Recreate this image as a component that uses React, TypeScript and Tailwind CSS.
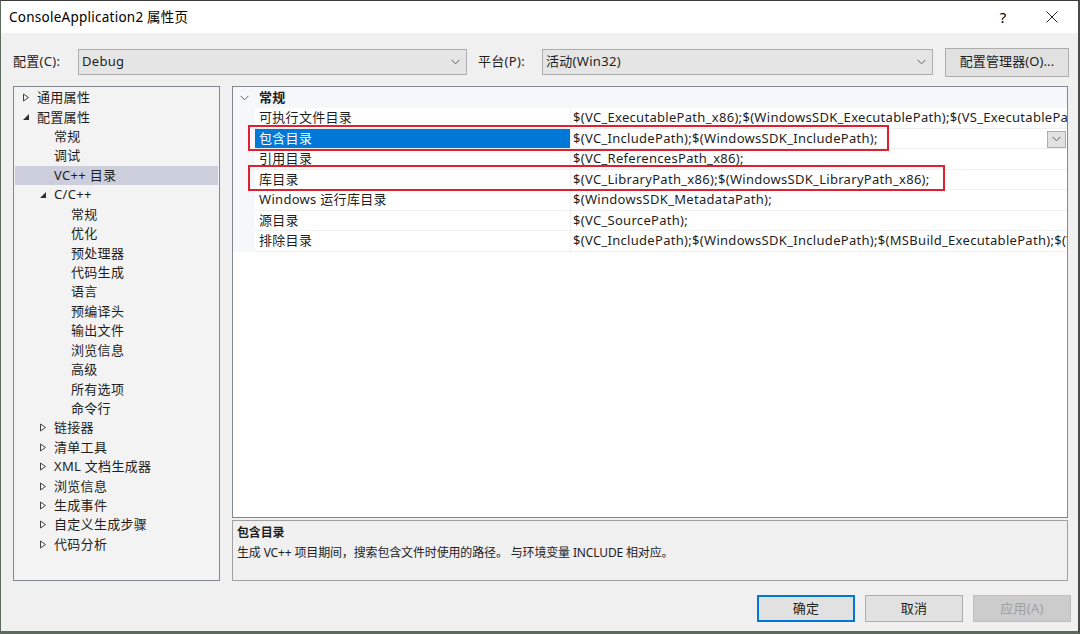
import React from "react";

const FONT = { fontFamily: '"Noto Sans", "Noto Sans CJK SC", sans-serif' };

function Chevron({ className = "" }: { className?: string }) {
  return (
    <svg width="9" height="6" viewBox="0 0 9 6" className={className}>
      <path d="M0.5 0.8 L4.5 4.8 L8.5 0.8" fill="none" stroke="#606060" strokeWidth="1" />
    </svg>
  );
}

function TriOpen() {
  return (
    <svg width="8" height="9" viewBox="0 0 8 9">
      <path d="M1.5 1 L6.5 4.5 L1.5 8 Z" fill="none" stroke="#404040" strokeWidth="1" />
    </svg>
  );
}
function TriFilled() {
  return (
    <svg width="8" height="8" viewBox="0 0 8 8">
      <path d="M7 1 L7 7 L1 7 Z" fill="#303030" />
    </svg>
  );
}

type TreeItem = { label: string; level: number; tri?: "open" | "filled"; selected?: boolean };

const tree: TreeItem[] = [
  { label: "通用属性", level: 0, tri: "open" },
  { label: "配置属性", level: 0, tri: "filled" },
  { label: "常规", level: 1 },
  { label: "调试", level: 1 },
  { label: "VC++ 目录", level: 1, selected: true },
  { label: "C/C++", level: 1, tri: "filled" },
  { label: "常规", level: 2 },
  { label: "优化", level: 2 },
  { label: "预处理器", level: 2 },
  { label: "代码生成", level: 2 },
  { label: "语言", level: 2 },
  { label: "预编译头", level: 2 },
  { label: "输出文件", level: 2 },
  { label: "浏览信息", level: 2 },
  { label: "高级", level: 2 },
  { label: "所有选项", level: 2 },
  { label: "命令行", level: 2 },
  { label: "链接器", level: 1, tri: "open" },
  { label: "清单工具", level: 1, tri: "open" },
  { label: "XML 文档生成器", level: 1, tri: "open" },
  { label: "浏览信息", level: 1, tri: "open" },
  { label: "生成事件", level: 1, tri: "open" },
  { label: "自定义生成步骤", level: 1, tri: "open" },
  { label: "代码分析", level: 1, tri: "open" },
];

const rows = [
  ["可执行文件目录", "$(VC_ExecutablePath_x86);$(WindowsSDK_ExecutablePath);$(VS_ExecutablePath);$(MSBuild_ExecutablePath);$(FxCopDir);$(PATH);"],
  ["包含目录", "$(VC_IncludePath);$(WindowsSDK_IncludePath);"],
  ["引用目录", "$(VC_ReferencesPath_x86);"],
  ["库目录", "$(VC_LibraryPath_x86);$(WindowsSDK_LibraryPath_x86);"],
  ["Windows 运行库目录", "$(WindowsSDK_MetadataPath);"],
  ["源目录", "$(VC_SourcePath);"],
  ["排除目录", "$(VC_IncludePath);$(WindowsSDK_IncludePath);$(MSBuild_ExecutablePath);$(VC_LibraryPath_x86);"],
];

export default function App() {
  return (
    <div
      className="w-[1080px] h-[634px] bg-[#f0f0f0] border-l border-t border-b-[3px] border-r-[2px] border-l-[#5d6b5e] border-t-[#3c3c3c] border-b-[#5d6b5e] border-r-[#4a4a4a] flex flex-col text-[#1e1e1e] overflow-hidden"
      style={FONT}
    >
      {/* title bar */}
      <div className="h-[32px] bg-white flex items-center shrink-0">
        <div className="pl-[8px] text-[13.5px] tracking-[0.25px] text-black flex-1">ConsoleApplication2 属性页</div>
        <div className="w-[46px] text-[15px] text-black text-center mr-[3px]">?</div>
        <div className="w-[46px] flex justify-center mr-[3px]">
          <svg width="12" height="12" viewBox="0 0 12 12">
            <path d="M0.5 0.5 L11.5 11.5 M11.5 0.5 L0.5 11.5" stroke="#222" strokeWidth="1" />
          </svg>
        </div>
      </div>

      {/* config row */}
      <div className="flex items-center h-[28px] mt-[15px] pl-[12px] text-[13px] tracking-[0.3px] shrink-0">
        <div className="w-[65px]">配置(C):</div>
        <div className="w-[389px] h-[26px] bg-[#e5e5e5] border border-[#adadad] flex items-center pl-[3px] pr-[6px]">
          <span className="flex-1">Debug</span>
          <Chevron />
        </div>
        <div className="w-[75px] pl-[11px]">平台(P):</div>
        <div className="w-[391px] h-[26px] bg-[#e5e5e5] border border-[#adadad] flex items-center pl-[3px] pr-[6px]">
          <span className="flex-1">活动(Win32)</span>
          <Chevron />
        </div>
        <div className="ml-[12px] w-[124px] h-[29px] bg-[#e1e1e1] border border-[#adadad] flex items-center justify-center tracking-[0.1px]">
          配置管理器(O)...
        </div>
      </div>

      {/* main */}
      <div className="flex mt-[10px] pl-[12px] gap-[12px] h-[495px] shrink-0">
        {/* tree */}
        <div className="w-[207px] h-full border border-[#828790] bg-[#f3f3f3] pt-[1px] px-[1px] text-[13px] tracking-[0.3px]">
          {tree.map((t, i) => (
            <div
              key={i}
              className={`h-[19.43px] flex items-center ${t.selected ? "bg-[#cccedb]" : ""}`}
            >
              <div
                className={`flex items-center justify-center w-[22px] shrink-0 ${
                  t.level === 0 ? "ml-0" : t.level === 1 ? "ml-[17px]" : "ml-[34px]"
                }`}
              >
                {t.tri === "open" ? <TriOpen /> : t.tri === "filled" ? <TriFilled /> : null}
              </div>
              <span className="leading-none whitespace-nowrap">{t.label}</span>
            </div>
          ))}
        </div>

        {/* right column */}
        <div className="w-[836px] flex flex-col">
          <div className="relative h-[432px] border border-[#828790] bg-white">
            <div className="h-[21px] bg-[#f5f7fa] flex items-center text-[13px] tracking-[0.3px]">
              <div className="w-[22px] flex justify-center">
                <Chevron />
              </div>
              <span className="ml-[4px] font-bold">常规</span>
            </div>
            <div className="flex">
              <div className="w-[22px] bg-[#f5f7fa]" />
              <div className="flex-1 overflow-hidden">
                {rows.map(([name, val], i) => {
                  const sel = i === 1;
                  return (
                    <div key={i} className="h-[20.5px] flex border-b border-[#f0f0f0] text-[13px] tracking-[0.3px]">
                      <div
                        className={`w-[315px] shrink-0 flex items-center pl-[4px] ${
                          sel ? "bg-[#0078d7] text-white" : ""
                        }`}
                      >
                        {name}
                      </div>
                      <div className="w-[1px] bg-[#f0f0f0] shrink-0" />
                      <div className="flex-1 flex items-center pl-[2px] whitespace-nowrap overflow-hidden relative">
                        {val}
                        {sel && (
                          <div className="absolute right-[1px] top-[2px] w-[19px] h-[17px] bg-[#e1e1e1] border border-[#adadad] flex items-center justify-center">
                            <Chevron />
                          </div>
                        )}
                      </div>
                    </div>
                  );
                })}
              </div>
            </div>
            {/* red annotation boxes */}
            <div className="absolute left-[15px] top-[38px] w-[641px] h-[26px] border-[2.5px] border-[#e0202e]" />
            <div className="absolute left-[15px] top-[78px] w-[697px] h-[26px] border-[2.5px] border-[#e0202e]" />
          </div>
          <div className="mt-[2px] h-[61px] border border-[#a0a0a0] bg-[#f0f0f0] px-[4px] pt-[2px] text-[12px] tracking-[-0.15px]">
            <div className="font-bold leading-[20px]">包含目录</div>
            <div className="leading-[20px]">生成 VC++ 项目期间，搜索包含文件时使用的路径。 与环境变量 INCLUDE 相对应。</div>
          </div>
        </div>
      </div>

      {/* buttons */}
      <div className="flex justify-end mt-[14px] pr-[7px] gap-[10px] text-[13px] tracking-[0.3px]">
        <div className="w-[98px] h-[27px] bg-[#e1e1e1] border-2 border-[#0078d7] flex items-center justify-center">确定</div>
        <div className="w-[98px] h-[27px] bg-[#e1e1e1] border border-[#adadad] flex items-center justify-center">取消</div>
        <div className="w-[98px] h-[27px] bg-[#cccccc] border border-[#bfbfbf] flex items-center justify-center text-[#a0a0a0]">应用(A)</div>
      </div>
    </div>
  );
}
